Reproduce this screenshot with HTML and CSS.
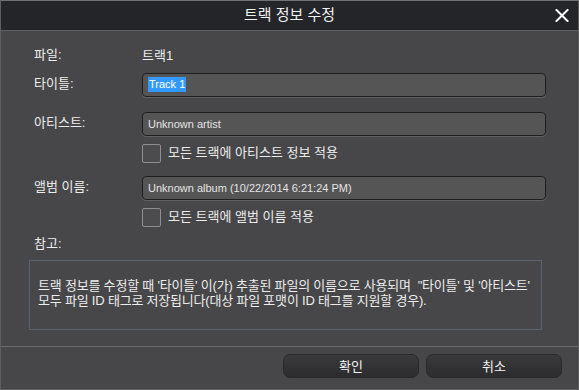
FILE: index.html
```html
<!doctype html>
<html>
  <head>
    <meta charset="utf-8">
    <title>트랙 정보 수정</title>
    <link rel="stylesheet" href="styles.css">
  </head>
  <body>
    <div class="dialog">
      <div class="titlebar">
        <span></span>
        <span class="title">트랙 정보 수정</span>
        <button class="close" aria-label="닫기">
          <svg viewBox="0 0 14 13" fill="none" stroke="currentColor" stroke-width="2">
            <!-- two crossing strokes -->
            <path d="M1.5 1l11 11M12.5 1l-11 11" stroke-linecap="square" />
          </svg>
        </button>
      </div>

      <div class="content">
        <div class="row row-file">
          <span class="label">파일:</span>
          <span class="value">트랙1</span>
        </div>

        <div class="row row-title">
          <label class="label" for="title">타이틀:</label>
          <div class="field" id="title"><span class="selected">Track 1</span></div>
        </div>

        <div class="row row-artist">
          <label class="label" for="artist">아티스트:</label>
          <div class="field" id="artist">Unknown artist</div>
        </div>

        <div class="row row-check">
          <span class="checkbox"></span>
          <span class="check-text">모든 트랙에 아티스트 정보 적용</span>
        </div>

        <div class="row row-album">
          <label class="label" for="album">앨범 이름:</label>
          <div class="field" id="album">Unknown album (10/22/2014 6:21:24 PM)</div>
        </div>

        <div class="row row-check">
          <span class="checkbox"></span>
          <span class="check-text">모든 트랙에 앨범 이름 적용</span>
        </div>

        <div class="row row-note">
          <span class="label">참고:</span>
        </div>

        <div class="note">
          트랙 정보를 수정할 때 '타이틀' 이(가) 추출된 파일의 이름으로 사용되며&nbsp; "타이틀' 및 '아티스트'<br>
          모두 파일 ID 태그로 저장됩니다(대상 파일 포맷이 ID 태그를 지원할 경우).
        </div>
      </div>

      <div class="footer">
        <button class="btn">확인</button>
        <button class="btn">취소</button>
      </div>
    </div>
  </body>
</html>
```

FILE: styles.css
```css
:root {
  --body-bg: #474749;
  --title-bg: #242528;
  --field-bg: #555556;
  --text-color: #ececec;
  --edge: #5e5e60;
}

* {
  box-sizing: border-box;
}

body {
  margin: 0;
  background: var(--body-bg);
  font-family: "Liberation Sans", "Noto Sans CJK KR", sans-serif;
  font-size: 13px;
  color: var(--text-color);
}

.dialog {
  width: 579px;
  height: 390px;
  display: flex;
  flex-direction: column;
  background: var(--body-bg);
  border: 1px solid var(--edge);
  border-top-color: #707072;
}

.titlebar {
  height: 30px;
  display: grid;
  grid-template-columns: 1fr auto 1fr;
  align-items: center;
  background: var(--title-bg);
  border-bottom: 1px solid var(--edge);
}

.title {
  font-size: 15px;
  line-height: 18px;
  color: #f2f2f2;
  padding-bottom: 2px;
}

.close {
  justify-self: end;
  width: 14px;
  height: 13px;
  margin: 0 9px 1px 0;
  padding: 0;
  border: none;
  background: none;
  color: #ffffff;
  display: flex;
}

.close svg {
  width: 14px;
  height: 13px;
}

.content {
  padding: 15px 36px 0 28px;
}

.row {
  display: flex;
  align-items: center;
  padding-left: 5px;
  line-height: 16px;
}

.label {
  width: 108px;
  flex: none;
  padding-bottom: 3px;
}

.row-file {
  height: 20px;
}

.row-title {
  margin-top: 7px;
  height: 24px;
}

.row-artist {
  margin-top: 15px;
  height: 24px;
}

.row-album {
  margin-top: 13px;
  height: 24px;
}

.row-check {
  margin-top: 8px;
  height: 19px;
  padding-left: 113px;
  gap: 7px;
}

.row-note {
  margin-top: 8px;
  height: 20px;
}

.field {
  width: 404px;
  height: 24px;
  flex: none;
  padding: 0 5px 1px;
  display: flex;
  align-items: center;
  font-size: 11px;
  color: #e4e4e4;
  background: var(--field-bg);
  border: 1px solid #1f1f20;
  border-radius: 4px;
  box-shadow: 0 1px 0 #606062;
}

.selected {
  background: #3399ff;
  color: #ffffff;
  padding: 0 1px;
  line-height: 15px;
}

.checkbox {
  width: 19px;
  height: 19px;
  flex: none;
  background: #4c4c4e;
  border: 1px solid #8e8e8e;
  border-radius: 2px;
}

.check-text {
  padding-bottom: 1px;
}

.note {
  margin-top: 5px;
  height: 70px;
  padding: 17px 8px 0;
  border: 1px solid #5b606e;
  line-height: 15px;
  letter-spacing: -0.2px;
  white-space: nowrap;
}

.footer {
  margin-top: auto;
  height: 43px;
  display: flex;
  justify-content: flex-end;
  gap: 7px;
  padding: 7px 16px 0 0;
  border-top: 1px solid #6a6a6c;
}

.btn {
  width: 136px;
  height: 24px;
  font-family: "Liberation Sans", "Noto Sans CJK KR", sans-serif;
  font-size: 13px;
  color: #f2f2f2;
  background: linear-gradient(#3a3a3c, #2c2c2e);
  border: 1px solid #2a2a2b;
  border-radius: 7px;
  padding: 0 0 2px;
}
```
